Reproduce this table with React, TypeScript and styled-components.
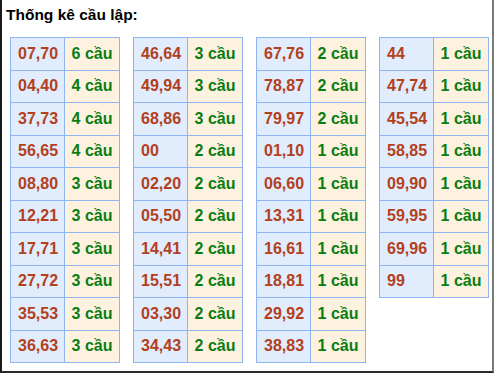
import React from "react";
import styled, { createGlobalStyle } from "styled-components";

type Row = [string, number];

const columns: Row[][] = [
  [
    ["07,70", 6],
    ["04,40", 4],
    ["37,73", 4],
    ["56,65", 4],
    ["08,80", 3],
    ["12,21", 3],
    ["17,71", 3],
    ["27,72", 3],
    ["35,53", 3],
    ["36,63", 3],
  ],
  [
    ["46,64", 3],
    ["49,94", 3],
    ["68,86", 3],
    ["00", 2],
    ["02,20", 2],
    ["05,50", 2],
    ["14,41", 2],
    ["15,51", 2],
    ["03,30", 2],
    ["34,43", 2],
  ],
  [
    ["67,76", 2],
    ["78,87", 2],
    ["79,97", 2],
    ["01,10", 1],
    ["06,60", 1],
    ["13,31", 1],
    ["16,61", 1],
    ["18,81", 1],
    ["29,92", 1],
    ["38,83", 1],
  ],
  [
    ["44", 1],
    ["47,74", 1],
    ["45,54", 1],
    ["58,85", 1],
    ["09,90", 1],
    ["59,95", 1],
    ["69,96", 1],
    ["99", 1],
  ],
];

const GlobalStyle = createGlobalStyle`
  html, body {
    margin: 0;
    padding: 0;
    background: #fff;
  }
  body {
    font-family: "Liberation Sans", Arial, sans-serif;
  }
`;

const Box = styled.div`
  width: 494px;
  height: 373px;
  box-sizing: border-box;
  border-left: 2px solid #1a1a1a;
  border-right: 2px solid #7a7a7a;
  border-bottom: 2px solid #2a2a2a;
  background: #fff;
  overflow: hidden;
`;

const Title = styled.h3`
  margin: 0;
  padding: 5px 0 0 4px;
  height: 32px;
  box-sizing: border-box;
  font-size: 15.5px;
  font-weight: bold;
  color: #000;
  line-height: 19px;
`;

const Grid = styled.div`
  display: flex;
  align-items: flex-start;
  gap: 13px;
  padding: 5px 0 0 8px;
`;

const Table = styled.table`
  flex: none;
  width: 110px;
  border-collapse: collapse;
  table-layout: fixed;
`;

const Tr = styled.tr`
  height: 32.5px;
`;

const Cell = styled.td<{ $kind: "num" | "count" }>`
  border: 1px solid #8fb4f2;
  padding: 0 0 0 7px;
  font-size: 16px;
  font-weight: bold;
  text-align: left;
  white-space: nowrap;
  overflow: hidden;
  width: ${(p) => (p.$kind === "num" ? "49%" : "51%")};
  background: ${(p) => (p.$kind === "num" ? "#e1ecfd" : "#fdf2e0")};
  color: ${(p) => (p.$kind === "num" ? "#b2401c" : "#0a7d12")};
`;

export default function App() {
  return (
    <>
      <GlobalStyle />
      <Box>
        <Title>Thống kê cầu lập:</Title>
        <Grid>
          {columns.map((rows, i) => (
            <Table key={i}>
              <tbody>
                {rows.map(([pair, n]) => (
                  <Tr key={pair}>
                    <Cell $kind="num">{pair}</Cell>
                    <Cell $kind="count">{n} cầu</Cell>
                  </Tr>
                ))}
              </tbody>
            </Table>
          ))}
        </Grid>
      </Box>
    </>
  );
}
